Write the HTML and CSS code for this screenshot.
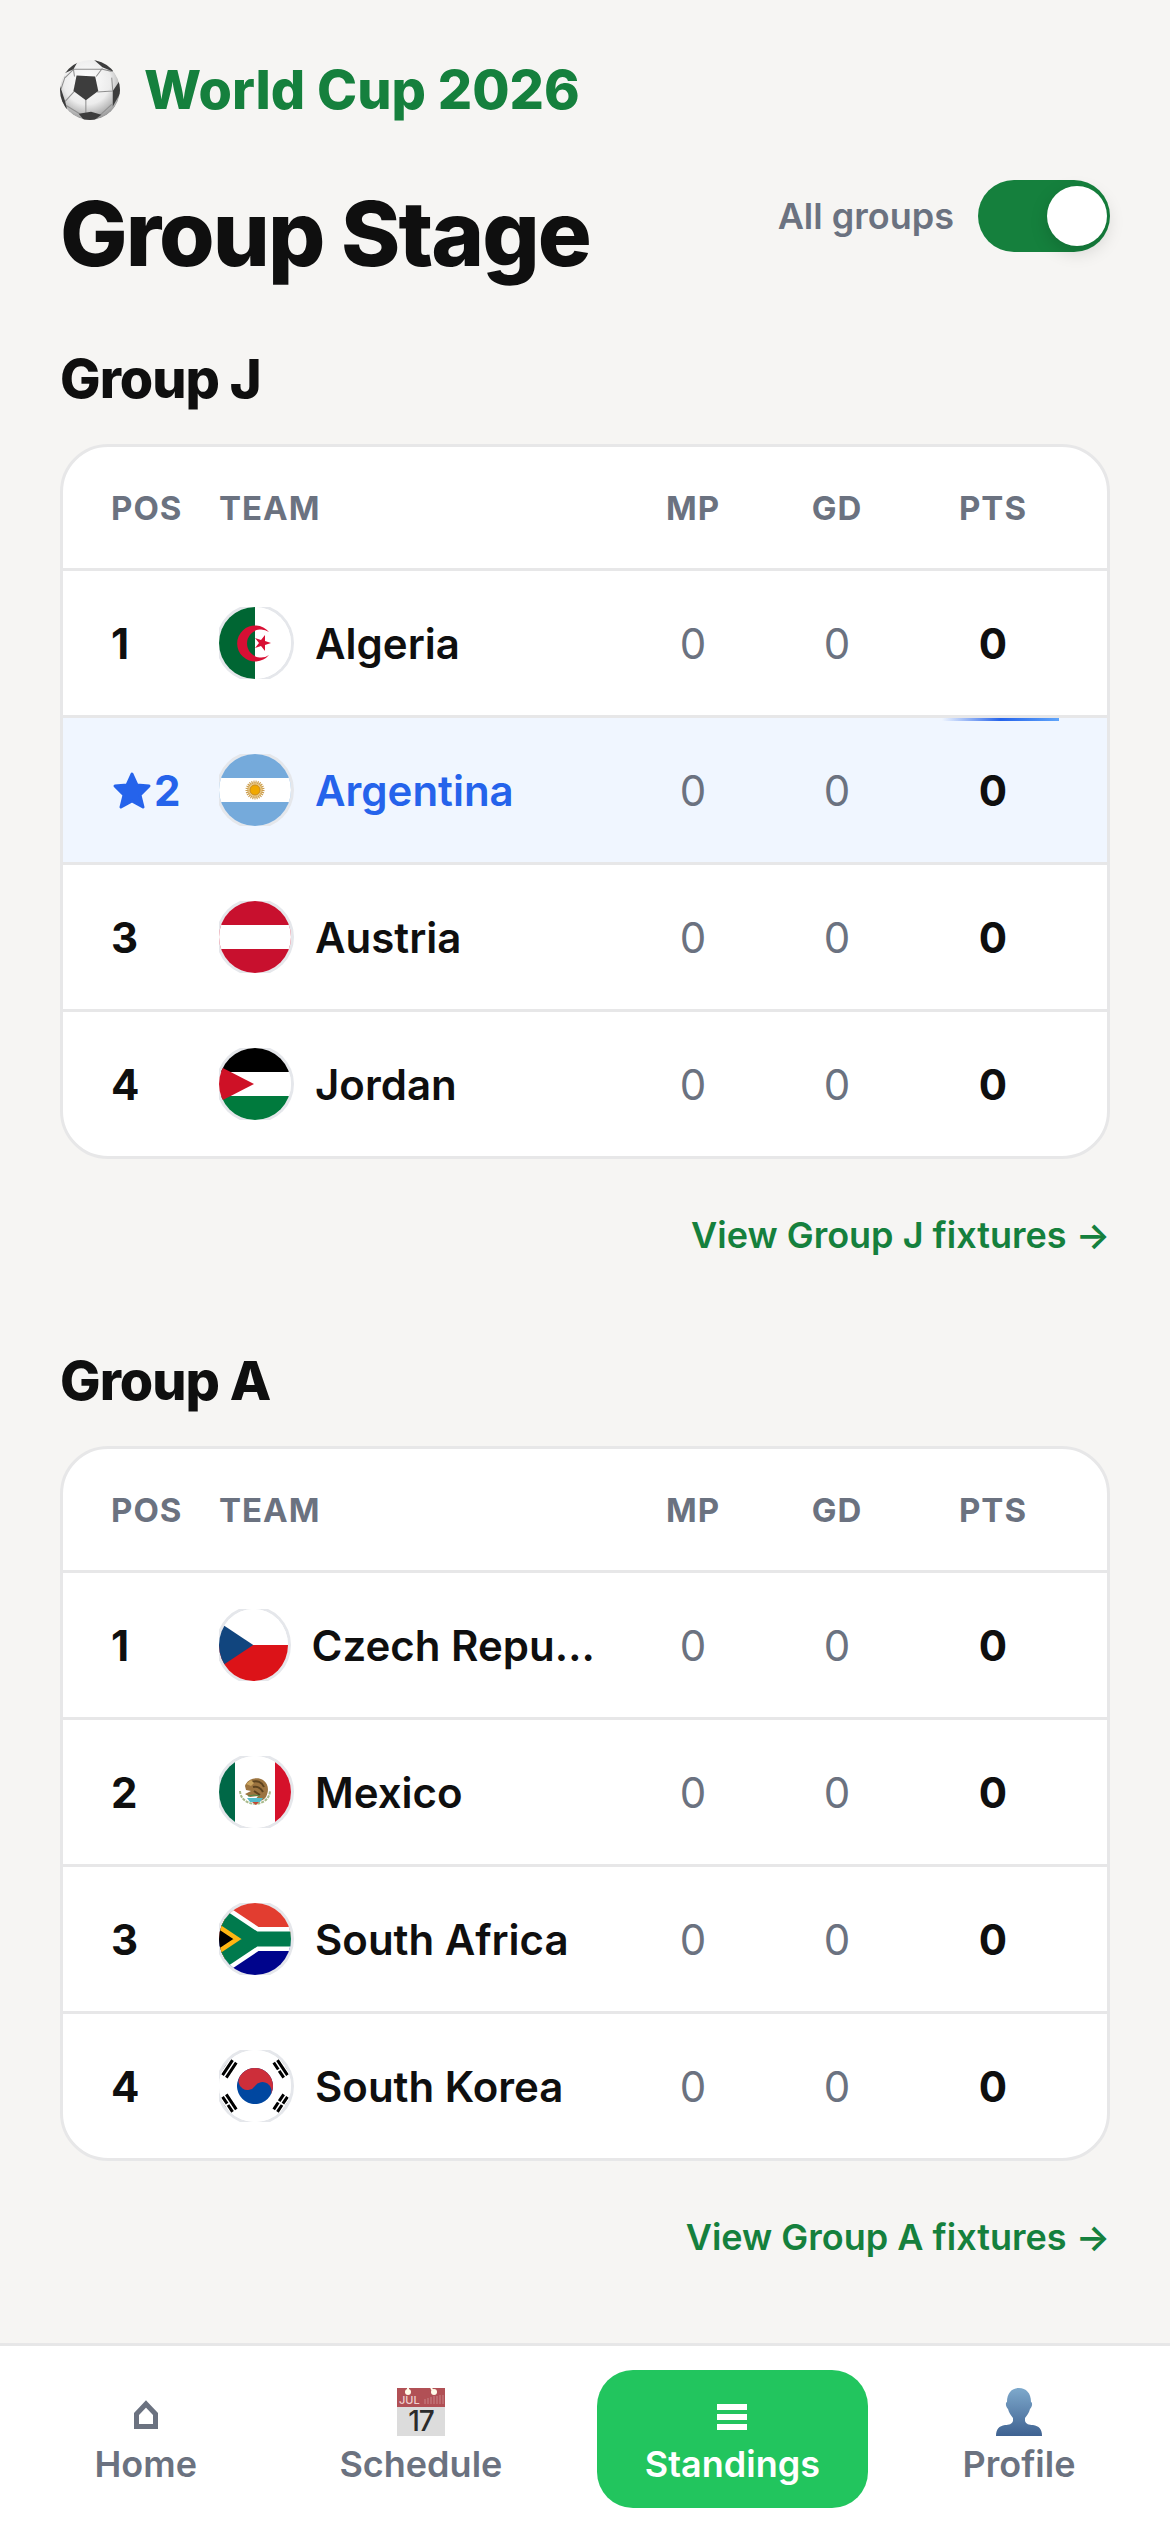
FILE: index.html
```html
<!DOCTYPE html>
<html lang="en">
<head>
    <meta charset="UTF-8">
    <meta name="viewport" content="width=device-width, initial-scale=1.0">
    <title>World Cup 2026 - Group Stage</title>
    <link rel="stylesheet" href="styles.css">
</head>
<body>
    <main class="page">
        <header class="brand">
            <svg class="brand-ball" viewBox="0 0 58 58" aria-hidden="true">
                <defs>
                    <radialGradient id="ballShade" cx="45%" cy="35%" r="65%">
                        <stop offset="0" stop-color="#ffffff"/>
                        <stop offset="0.6" stop-color="#ececec"/>
                        <stop offset="1" stop-color="#9a9a9a"/>
                    </radialGradient>
                    <clipPath id="ballClip"><circle cx="29" cy="29" r="29"/></clipPath>
                </defs>
                <g clip-path="url(#ballClip)">
                    <circle cx="29" cy="29" r="29" fill="url(#ballShade)"/>
                    <path d="M14 16l-1-7M35 16l6-8M36 31l15-1M25 38v14M14 30l-9 10M13 9h28l9 2M5 17l8-8M51 30l-1-13M50 43l-11 10M19 52L6 44M1 28L5 16" fill="none" stroke="#8f8f8f" stroke-width="1"/>
                    <path d="M16 15l18 1 3 14-12 9-12-9z" fill="#3d3d3d"/>
                    <path d="M4 13l9-4 5-9-9 2zM33 0l8 7 10 4 3-4-9-7zM51 30l6-9 3 8-9 16zM18 52l12-2 10 3-8 6h-8zM0 25l5 15 2 8-8-6z" fill="#3d3d3d"/>
                </g>
            </svg>
            <span class="brand-name">World Cup 2026</span>
        </header>

        <div class="title-row">
            <h1>Group Stage</h1>
            <label class="toggle" for="allGroups">
                All groups
                <input type="checkbox" role="switch" id="allGroups" checked>
            </label>
        </div>

        <section class="group">
            <h2>Group J</h2>
            <div class="card">
                <table>
                    <colgroup>
                        <col class="col-pos"><col><col class="col-stat"><col class="col-stat"><col class="col-pts">
                    </colgroup>
                    <thead>
                        <tr><th class="pos">Pos</th><th class="team">Team</th><th>MP</th><th>GD</th><th class="pts">Pts</th></tr>
                    </thead>
                    <tbody>
                        <tr>
                            <td class="pos">1</td>
                            <td class="team"><div class="team-cell">
                                <svg class="flag" viewBox="0 0 72 72" preserveAspectRatio="xMidYMid slice" aria-hidden="true">
                                    <path fill="#fff" d="M0 0h72v72H0z"/>
                                    <path fill="#006633" d="M0 0h36v72H0z"/>
                                    <path fill="#d80f34" d="M50 25a18 18 0 1 0 0 23a14 14 0 1 1 0-23z"/>
                                    <path fill="#d80f34" d="M52 36l-6 2 0 6-4-5-6 2 4-5-4-5 6 2 4-5 0 6z"/>
                                </svg>
                                <span class="team-name">Algeria</span>
                            </div></td>
                            <td>0</td><td>0</td><td class="pts">0</td>
                        </tr>
                        <tr class="favorite">
                            <td class="pos"><div class="pos-cell">
                                <svg class="star" viewBox="0 0 40 40" aria-hidden="true">
                                    <path d="M21 4l5 11 12 1-9 9 3 12-11-6-11 6 3-12-9-9 12-1z"/>
                                </svg>2
                            </div></td>
                            <td class="team"><div class="team-cell">
                                <svg class="flag" viewBox="0 0 72 72" preserveAspectRatio="xMidYMid slice" aria-hidden="true">
                                    <path fill="#75aadb" d="M0 0h72v72H0z"/>
                                    <path fill="#fff" d="M0 24h72v24H0z"/>
                                    <circle cx="36" cy="36" r="8" fill="#e8c98a"/>
                                    <circle cx="36" cy="36" r="8" fill="none" stroke="#c99a4a" stroke-width="3" stroke-dasharray="1 1"/>
                                    <circle cx="36" cy="36" r="5" fill="#f0a800" stroke="#c98a1c"/>
                                </svg>
                                <span class="team-name">Argentina</span>
                            </div></td>
                            <td>0</td><td>0</td><td class="pts">0</td>
                        </tr>
                        <tr>
                            <td class="pos">3</td>
                            <td class="team"><div class="team-cell">
                                <svg class="flag" viewBox="0 0 72 72" preserveAspectRatio="xMidYMid slice" aria-hidden="true">
                                    <path fill="#c8102e" d="M0 0h72v72H0z"/>
                                    <path fill="#fff" d="M0 24h72v24H0z"/>
                                </svg>
                                <span class="team-name">Austria</span>
                            </div></td>
                            <td>0</td><td>0</td><td class="pts">0</td>
                        </tr>
                        <tr>
                            <td class="pos">4</td>
                            <td class="team"><div class="team-cell">
                                <svg class="flag" viewBox="0 0 72 72" preserveAspectRatio="xMidYMid slice" aria-hidden="true">
                                    <path fill="#fff" d="M0 0h72v72H0z"/>
                                    <path d="M0 0h72v24H0z"/>
                                    <path fill="#007a3d" d="M0 48h72v24H0z"/>
                                    <path fill="#ce1126" d="M0 18l35 18L0 54z"/>
                                </svg>
                                <span class="team-name">Jordan</span>
                            </div></td>
                            <td>0</td><td>0</td><td class="pts">0</td>
                        </tr>
                    </tbody>
                </table>
            </div>
            <a class="fixtures-link" href="#group-j">View Group J fixtures →</a>
        </section>

        <section class="group">
            <h2>Group A</h2>
            <div class="card">
                <table>
                    <colgroup>
                        <col class="col-pos"><col><col class="col-stat"><col class="col-stat"><col class="col-pts">
                    </colgroup>
                    <thead>
                        <tr><th class="pos">Pos</th><th class="team">Team</th><th>MP</th><th>GD</th><th class="pts">Pts</th></tr>
                    </thead>
                    <tbody>
                        <tr>
                            <td class="pos">1</td>
                            <td class="team"><div class="team-cell">
                                <svg class="flag" viewBox="0 0 72 72" preserveAspectRatio="xMidYMid slice" aria-hidden="true">
                                    <path fill="#fff" d="M0 0h72v36H0z"/>
                                    <path fill="#dc1318" d="M0 36h72v36H0z"/>
                                    <path fill="#11457e" d="M-18 0l54 36-54 36z"/>
                                </svg>
                                <span class="team-name">Czech Republic</span>
                            </div></td>
                            <td>0</td><td>0</td><td class="pts">0</td>
                        </tr>
                        <tr>
                            <td class="pos">2</td>
                            <td class="team"><div class="team-cell">
                                <svg class="flag" viewBox="0 0 72 72" preserveAspectRatio="xMidYMid slice" aria-hidden="true">
                                    <path fill="#fff" d="M0 0h72v72H0z"/>
                                    <path fill="#006847" d="M0 0h16v72H0z"/>
                                    <path fill="#d5112a" d="M56 0h16v72H56z"/>
                                    <path d="M21 35c1 17 29 17 30 0" fill="none" stroke="#a9b98a" stroke-width="2" stroke-dasharray="3 1"/>
                                    <path d="M26 30c2-7 12-10 18-6 6 4 6 11 3 17-3 4-7 5-11 3l3-4-8 1-5-3 6-3-5-1z" fill="#9c7440"/>
                                    <path d="M33 26c5-2 10 0 12 5M34 31c4-1 8 1 10 5M35 35l6 4" fill="none" stroke="#5d431f" stroke-width="2"/>
                                    <path d="M27 28l5-4 3 3-3 3z" fill="#c9a35e"/>
                                    <path d="M28 42h16l-3 4H31z" fill="#54bccb"/>
                                    <path d="M33 46h7l-3 3z" fill="#c24a35"/>
                                    <path d="M29 40l6-1 6 1" fill="none" stroke="#4c8a4a" stroke-width="1"/>
                                </svg>
                                <span class="team-name">Mexico</span>
                            </div></td>
                            <td>0</td><td>0</td><td class="pts">0</td>
                        </tr>
                        <tr>
                            <td class="pos">3</td>
                            <td class="team"><div class="team-cell">
                                <svg class="flag" viewBox="18 0 72 72" preserveAspectRatio="xMidYMid slice" aria-hidden="true">
                                    <clipPath id="zaHoist"><path d="M0 0l54 36L0 72z"/></clipPath>
                                    <path fill="#e23d30" d="M0 0h108v36H0z"/>
                                    <path fill="#00048c" d="M0 36h108v36H0z"/>
                                    <g fill="none" stroke-width="24">
                                        <path stroke="#fff" d="M0 0l54 36L0 72M54 36h54"/>
                                        <path fill="#000" stroke="#ffb612" clip-path="url(#zaHoist)" d="M0 0l54 36L0 72"/>
                                        <path stroke="#007a4d" stroke-width="15" d="M0 0l54 36L0 72M54 36h54"/>
                                    </g>
                                </svg>
                                <span class="team-name">South Africa</span>
                            </div></td>
                            <td>0</td><td>0</td><td class="pts">0</td>
                        </tr>
                        <tr>
                            <td class="pos">4</td>
                            <td class="team"><div class="team-cell">
                                <svg class="flag" viewBox="-36 -36 72 72" preserveAspectRatio="xMidYMid slice" aria-hidden="true">
                                    <path fill="#fff" d="M-36-36h72v72h-72z"/>
                                    <g transform="rotate(33.7)">
                                        <circle r="18" fill="#0047a0"/>
                                        <path fill="#cd2e3a" d="M-18 0A18 18 0 0 1 18 0A9 9 0 0 0 0 0A9 9 0 0 1-18 0z"/>
                                        <path stroke="#000" stroke-width="3" d="M-28.5-9V9M-33-9V9M-37.5-9V9M28.5-9v8.2M28.5.8V9M33-9v8.2M33 .8V9M37.5-9v8.2M37.5.8V9"/>
                                    </g>
                                    <path transform="rotate(-33.7)" stroke="#000" stroke-width="3" d="M-28.5-9V9M-33-9v8.2M-33 .8V9M-37.5-9V9M28.5-9v8.2M28.5.8V9M33-9V9M37.5-9v8.2M37.5.8V9"/>
                                </svg>
                                <span class="team-name">South Korea</span>
                            </div></td>
                            <td>0</td><td>0</td><td class="pts">0</td>
                        </tr>
                    </tbody>
                </table>
            </div>
            <a class="fixtures-link" href="#group-a">View Group A fixtures →</a>
        </section>
    </main>

    <nav class="tabbar">
        <a class="tab" href="#home">
            <svg class="tab-icon" viewBox="0 0 48 48" aria-hidden="true">
                <path d="M24 16l9.500 10v12.500h-19V26z" fill="none" stroke="currentColor" stroke-width="5"/>
            </svg>
            Home
        </a>
        <a class="tab" href="#schedule">
            <svg class="tab-icon" viewBox="0 0 48 48" aria-hidden="true">
                <path fill="#dcdcdc" d="M0 0h48v48H0z"/>
                <path fill="#b15055" d="M0 0h48v19H0z"/>
                <path stroke="#c98488" d="M28 16v-5M31 16v-6M34 16V9M37 16V8M40 16V8M43 16V7M46 16V7"/>
                <circle cx="11" cy="4" r="3" fill="#fffbe8"/>
                <circle cx="37" cy="4" r="3" fill="#fffbe8"/>
                <path stroke="#fffbe8" stroke-width="2" d="M11 0v4M34 0l3 4"/>
                <text class="cal-month" x="2" y="16">JUL</text>
                <text class="cal-day" x="24" y="43">17</text>
            </svg>
            Schedule
        </a>
        <a class="tab active" href="#standings" aria-current="page">
            <svg class="tab-icon" viewBox="0 0 48 48" aria-hidden="true">
                <path fill="currentColor" d="M9 16h30v6H9zM9 26h30v6H9zM9 36h30v6H9z"/>
            </svg>
            Standings
        </a>
        <a class="tab" href="#profile">
            <svg class="tab-icon" viewBox="0 0 48 48" aria-hidden="true">
                <defs>
                    <linearGradient id="person" x2="0" y2="1">
                        <stop offset="0" stop-color="#7ea9cc"/>
                        <stop offset="1" stop-color="#3f6291"/>
                    </linearGradient>
                </defs>
                <path fill="url(#person)" d="M24 0c7 0 12 5 12 14 2 1 1 5-1 7-1 4-3 6-5 9v3c1 3 4 4 8 4 6 1 9 4 9 11H1c0-7 3-10 9-11 4 0 7-1 8-4v-3c-2-3-4-5-5-9-2-2-3-6-1-7C12 5 17 0 24 0z"/>
            </svg>
            Profile
        </a>
    </nav>
</body>
</html>
```

FILE: styles.css
```css
* { margin: 0; padding: 0; box-sizing: border-box; }
body { min-height: 100vh; display: flex; flex-direction: column; background: #f6f5f3; color: #0f0f0f; font-family: Inter, "Liberation Sans", sans-serif; }
a { text-decoration: none; }
.page { flex: 1; padding: 60px; }

.brand { display: flex; align-items: center; gap: 24px; height: 60px; }
.brand-ball { width: 60px; height: 60px; flex: none; }
.brand-name { font-size: 54px; font-weight: 800; line-height: 60px; color: #15803d; }

.title-row { display: flex; justify-content: space-between; align-items: flex-start; margin-top: 60px; }
h1 { font-size: 90px; font-weight: 800; line-height: 108px; letter-spacing: -2px; }
.toggle { display: flex; align-items: center; gap: 24px; height: 72px; font-size: 36px; font-weight: 600; color: #6b7280; cursor: pointer; }
.toggle input { appearance: none; display: flex; align-items: center; justify-content: flex-end; width: 132px; height: 72px; padding: 3px; border-radius: 36px; background: #15803d; cursor: pointer; }
.toggle input::before { content: ""; width: 60px; height: 60px; border-radius: 50%; background: #fff; box-shadow: 0 6px 18px rgba(0, 0, 0, 0.15); }
.toggle input:not(:checked) { justify-content: flex-start; background: #d1d5db; }

.group { display: flex; flex-direction: column; margin-top: 58px; }
.group + .group { margin-top: 86px; }
h2 { font-size: 54px; font-weight: 800; line-height: 66px; letter-spacing: -1px; }
.card { margin-top: 32px; border: 3px solid #e7e7e8; border-radius: 48px; background: #fff; overflow: hidden; }

table { width: 100%; table-layout: fixed; border-collapse: separate; border-spacing: 0; }
.col-pos { width: 156px; }
.col-stat { width: 144px; }
.col-pts { width: 198px; }
th { height: 124px; border-bottom: 3px solid #e7e7e8; font-size: 33px; font-weight: 700; letter-spacing: 1px; text-transform: uppercase; color: #6b7280; }
td { height: 147px; border-bottom: 3px solid #e7e7e8; font-size: 42px; text-align: center; color: #6b7280; }
tbody tr:last-child td { height: 144px; border-bottom: none; }
.pos { padding-left: 48px; text-align: left; }
td.pos { font-weight: 700; color: #0f0f0f; }
.team { padding-right: 9px; text-align: left; }
.pts { position: relative; padding-right: 30px; }
td.pts { font-weight: 700; color: #0f0f0f; }

.team-cell { display: flex; align-items: center; gap: 24px; overflow: hidden; font-weight: 600; color: #0f0f0f; }
.flag { width: 72px; height: 72px; border-radius: 50%; box-shadow: 0 0 0 3px #e5e7eb; }
.team-name { min-width: 0; overflow: hidden; text-overflow: ellipsis; white-space: nowrap; }

.favorite td { background: #f0f6ff; }
.favorite td.pos, .favorite .team-cell { color: #2563eb; }
/* light streak on the top edge of the followed team */
.favorite td.pts::before { content: ""; position: absolute; top: 0; right: 48px; width: 117px; height: 3px; background: linear-gradient(90deg, transparent, #2563eb 50%, #60a5fa); }
.pos-cell { display: flex; align-items: center; gap: 3px; }
.star { width: 40px; height: 40px; fill: currentColor; stroke: currentColor; stroke-width: 3px; stroke-linejoin: round; }

.fixtures-link { align-self: flex-end; margin-top: 49px; font-size: 36px; font-weight: 600; line-height: 54px; color: #15803d; }

.tabbar { position: sticky; bottom: 0; display: flex; justify-content: space-evenly; padding: 24px 0; border-top: 3px solid #e7e7e8; background: #fff; }
.tab { display: flex; flex-direction: column; align-items: center; padding: 18px 48px 16px; border-radius: 36px; font-size: 36px; font-weight: 600; line-height: 56px; color: #6b7280; }
.tab.active { background: #22c55e; color: #fff; }
.tab-icon { width: 48px; height: 48px; overflow: visible; }
.cal-month { font-size: 11px; font-weight: 500; fill: #efd0d0; }
.cal-day { font-size: 28px; font-weight: 500; letter-spacing: -1px; line-height: 28px; text-anchor: middle; fill: #2b2b2b; }
```
